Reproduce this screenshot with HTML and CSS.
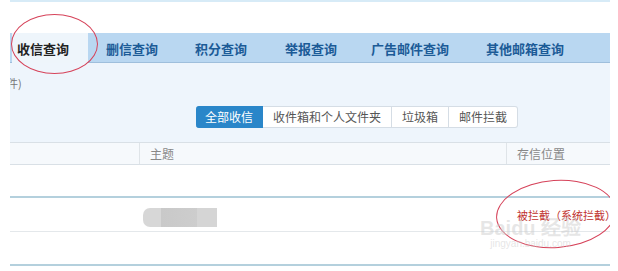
FILE: index.html
```html
<!DOCTYPE html>
<html lang="zh-CN">
<head>
    <meta charset="UTF-8">
    <title>收信查询</title>
    <link rel="stylesheet" href="styles.css">
</head>
<body>
    <div class="page">
        <div class="topline"></div>
        <div class="tabs">
            <div class="tab active">收信查询</div>
            <div class="tab">删信查询</div>
            <div class="tab">积分查询</div>
            <div class="tab">举报查询</div>
            <div class="tab">广告邮件查询</div>
            <div class="tab">其他邮箱查询</div>
        </div>
        <div class="panel">
            <div class="hint">件)</div>
            <div class="filters">
                <button class="on">全部收信</button>
                <button>收件箱和个人文件夹</button>
                <button>垃圾箱</button>
                <button>邮件拦截</button>
            </div>
        </div>
        <div class="thead">
            <div class="col c1"></div>
            <div class="col c2">主题</div>
            <div class="col c3">存信位置</div>
        </div>
        <div class="row r1 blue"></div>
        <div class="row r2">
            <div class="col c1"></div>
            <div class="col c2"><span class="blur"></span></div>
            <div class="col c3 red">被拦截（系统拦截）</div>
        </div>
        <div class="row r3 blue"></div>

        <!-- 标注 -->
        <div class="mark mark1"></div>
        <div class="mark mark2"></div>
        <div class="wm">
            <div class="wm-big">Bai<span>du</span> 经验</div>
            <div class="wm-small">jingyan.baidu.com</div>
        </div>
    </div>
</body>
</html>
```

FILE: styles.css
```css
body {
    margin: 0;
    background: #fff;
    font-family: "Noto Sans CJK SC", "Noto Sans", sans-serif;
}
.page {
    position: relative;
    width: 600px;
    height: 271px;
    margin-left: 10px;
    overflow: hidden;
}
.topline {
    height: 2px;
    background: #d7ebf7;
    margin-bottom: 31px;
}
.tabs {
    display: flex;
    align-items: flex-end;
    height: 29px;
    background: #b9d7f1;
    border-bottom: 1px solid #9fbfdc;
    padding-left: 2px;
}
.tab {
    height: 29px;
    line-height: 31px;
    font-size: 13px;
    font-weight: bold;
    color: #1c5b97;
}
.tab:nth-child(2) { padding: 0 18px 0 18px; }
.tab:nth-child(3) { padding: 0 19px 0 19px; }
.tab:nth-child(4) { padding: 0 17px 0 19px; }
.tab:nth-child(5) { padding: 0 18px 0 17px; }
.tab:nth-child(6) { padding: 0 19px 0 19px; }
.tab.active {
    background: #eef5fb;
    color: #222;
    padding: 0 19px 0 5px;
    margin-bottom: -1px;
    height: 30px;
}
.panel {
    background: #eef5fc;
    height: 79px;
    position: relative;
}
.hint {
    font-size: 11px;
    color: #777;
    padding-top: 12px;
    margin-left: -3px;
}
.filters {
    display: flex;
    margin: 15px 0 0 186px;
}
.filters button {
    font-family: inherit;
    font-size: 12px;
    color: #555;
    background: #fff;
    border: 1px solid #d5dde5;
    border-left: none;
    height: 22px;
    padding: 0 10px;
    line-height: 20px;
}
.filters button.on {
    background: #2a86c9;
    border-color: #2a86c9;
    color: #fff;
    border-radius: 3px 0 0 3px;
    padding: 0 9px;
}
.filters button:last-child {
    border-radius: 0 3px 3px 0;
}
.thead {
    display: flex;
    height: 21px;
    background: #f6f9fc;
    border-top: 1px solid #d9e0e6;
    border-bottom: 1px solid #d9e0e6;
    font-size: 12px;
    color: #888;
    line-height: 21px;
}
.col.c1 { width: 129px; border-right: 1px solid #dfe4e8; }
.col.c2 { flex: 1; padding-left: 10px; }
.col.c3 { width: 93px; padding-left: 10px; border-left: 1px solid #dfe4e8; }
.row.r2 .col { border: none; }
.row.r1 { height: 31px; }
.row.blue { border-bottom: 2px solid #b4d0dd; }
.row.r2 {
    display: flex;
    height: 33px;
    border-bottom: 1px solid #e4e8eb;
    align-items: center;
}
.row.r3 { height: 32px; }
.blur {
    display: inline-block;
    width: 74px;
    height: 19px;
    border-radius: 7px 0 0 7px;
    background: linear-gradient(90deg, #d7d7d7 0, #d7d7d7 18px, #c9c9c9 18px, #cdcdcd 54px, #d5d5d5 54px);
    margin-left: -6px;
    vertical-align: middle;
}
.col.red {
    color: #c0302d;
    font-size: 11px;
    padding-left: 2px;
    white-space: nowrap;
}
.mark {
    position: absolute;
    border: 1px solid #d6435a;
    border-radius: 50%;
}
.mark1 {
    left: 1px;
    top: 14px;
    width: 85px;
    height: 58px;
}
.mark2 {
    left: 486px;
    top: 180px;
    width: 118px;
    height: 66px;
    transform: rotate(-4deg);
}
.wm {
    position: absolute;
    left: 470px;
    top: 218px;
    color: rgba(205, 205, 205, 0.5);
    text-align: center;
}
.wm-big {
    font-family: "Liberation Sans", sans-serif;
    font-size: 20px;
    font-weight: bold;
    line-height: 20px;
}
.wm-small {
    font-family: "Liberation Sans", sans-serif;
    font-size: 10px;
    line-height: 12px;
}
```
